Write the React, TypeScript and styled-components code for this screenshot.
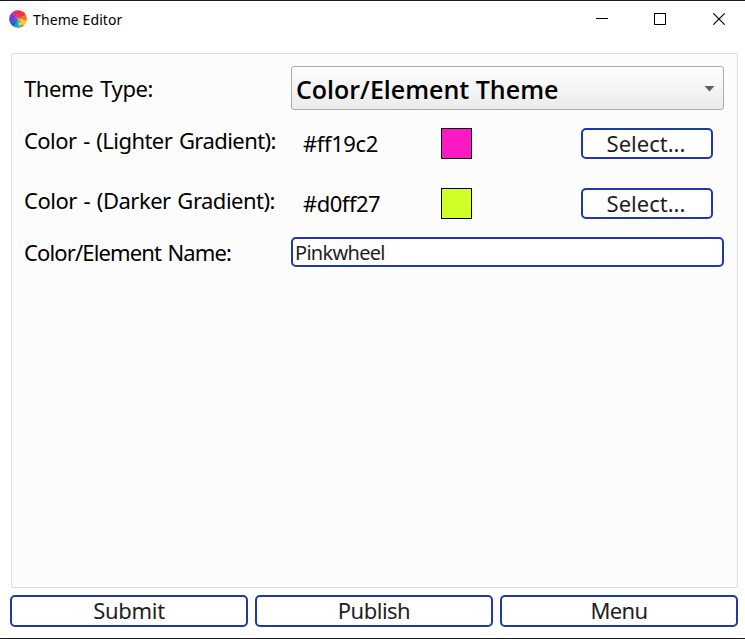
import React from "react";
import styled, { createGlobalStyle } from "styled-components";

const GlobalStyle = createGlobalStyle`
  * { box-sizing: border-box; }
  html, body { margin: 0; padding: 0; overflow: hidden; }
  body { background: #fff; color: #000; font-family: "Noto Sans", sans-serif; }
  button, input { font-family: inherit; margin: 0; }
`;

const Window = styled.div`
  width: 745px;
  height: 639px;
  display: flex;
  flex-direction: column;
  background: #fff;
  border-top: 1px solid #1b181b;
  border-bottom: 1px solid #1c1c20;
`;

const TitleBar = styled.header`
  height: 36px;
  flex: none;
  display: flex;
  align-items: center;
  padding-left: 9px;
`;

const Title = styled.h1`
  margin: 1px auto 0 6px;
  font-size: 14px;
  line-height: 20px;
  font-weight: 400;
  letter-spacing: 0.1px;
`;

const Captions = styled.div`
  display: flex;
  gap: 5.5px;
`;

const Caption = styled.button`
  width: 53px;
  height: 36px;
  padding: 0;
  border: 0;
  background: none;
  display: flex;
  align-items: center;
  justify-content: center;
`;

const Panel = styled.main`
  width: 727px;
  height: 535px;
  margin: 16px 0 0 11px;
  padding: 12px 13px 0 12px;
  border: 1px solid #dedede;
  border-radius: 1px;
  background: #fcfcfc;
`;

const Row = styled.div<{ $height: number; $gap: number }>`
  display: grid;
  grid-template-columns: 267px 433px;
  grid-template-rows: ${(p) => p.$height}px;
  margin-bottom: ${(p) => p.$gap}px;
`;

const Label = styled.label<{ $line: number; $tracking: number }>`
  font-size: 22px;
  line-height: ${(p) => p.$line}px;
  white-space: nowrap;
  word-spacing: 1.5px;
  letter-spacing: ${(p) => p.$tracking}px;
`;

const Combo = styled.button`
  display: flex;
  align-items: center;
  justify-content: space-between;
  height: 44px;
  padding: 2px 8px 0 4px;
  border: 1px solid #ababab;
  border-radius: 3px;
  background: linear-gradient(#fefefe, #ebebeb);
  color: #000;
  font: 600 25px/34px "Open Sans", sans-serif;
  text-align: left;
`;

const ColorField = styled.div`
  display: grid;
  grid-template-columns: 138px 140px 132px;
  grid-template-rows: 31px;
  padding-left: 12px;
`;

const Hex = styled.span<{ $tracking: number }>`
  font-size: 22px;
  line-height: 30px;
  letter-spacing: ${(p) => p.$tracking}px;
`;

const Swatch = styled.span<{ $color: string }>`
  width: 31px;
  height: 31px;
  border: 1px solid #000;
  background: ${(p) => p.$color};
`;

const Button = styled.button<{ $tracking?: number }>`
  padding: 0 0 2px;
  border: 2px solid #2039aa;
  border-radius: 5px;
  background: #fff;
  color: #1e1e1e;
  font-size: 22px;
  line-height: 26px;
  letter-spacing: ${(p) => p.$tracking ?? 0}px;
  overflow: hidden;
`;

const SelectButton = styled(Button)`
  padding: 0 2px 1px 0;
`;

const NameInput = styled.input`
  width: 433px;
  height: 30px;
  padding: 0 2px;
  border: 2px solid #2039aa;
  border-radius: 5px;
  background: #fff;
  color: #1e1e1e;
  font-size: 20px;
  letter-spacing: -0.7px;
  outline: none;
`;

const Footer = styled.footer`
  display: grid;
  grid-template-columns: 238px 238px 238px;
  grid-template-rows: 32px;
  gap: 7px;
  margin: 7px 0 0 10px;
`;

const wedges = ["#e5304a", "#ee3638", "#f0702c", "#f6b52a", "#58ae4c", "#1b9fd8", "#1767d2", "#3a55d8", "#8f30c0", "#d22f86"];

function point(angle: number) {
  const r = (angle * Math.PI) / 180;
  return `${(8.5 + 8.3 * Math.sin(r)).toFixed(2)} ${(8.5 - 8.3 * Math.cos(r)).toFixed(2)}`;
}

function Wheel() {
  return (
    <svg width="18" height="18" viewBox="0 0 17 17">
      {wedges.map((c, i) => (
        <path key={c} d={`M8.5 8.5L${point(i * 36 - 10)}A8.3 8.3 0 0 1 ${point(i * 36 + 27)}Z`} fill={c} />
      ))}
      <path d="M8.6 13l2.4-2.4 1.6-2.8 1.2 2.4 2.2.2-1.4 2-.4 2-2-.4-2.6 1z" fill="#f5cb32" />
    </svg>
  );
}

const colors = [
  { label: "Color - (Lighter Gradient):", hex: "#ff19c2", gap: 29, tracking: -0.56, hexTracking: -0.4 },
  { label: "Color - (Darker Gradient):", hex: "#d0ff27", gap: 18, tracking: -0.5, hexTracking: -0.5 },
];

export default function App() {
  return (
    <>
      <GlobalStyle />
      <Window>
        <TitleBar>
          <Wheel />
          <Title>Theme Editor</Title>
          <Captions>
            <Caption aria-label="Minimize">
              <svg width="12" height="12" shapeRendering="crispEdges"><path d="M0 5.5H12" stroke="#000" /></svg>
            </Caption>
            <Caption aria-label="Maximize">
              <svg width="12" height="12" shapeRendering="crispEdges"><rect x=".5" y=".5" width="11" height="11" fill="none" stroke="#000" /></svg>
            </Caption>
            <Caption aria-label="Close">
              <svg width="12" height="12"><path d="M.3.3L11.7 11.7M11.7.3L.3 11.7" stroke="#000" strokeWidth="1.1" /></svg>
            </Caption>
          </Captions>
        </TitleBar>
        <Panel>
          <Row $height={44} $gap={18}>
            <Label $line={44} $tracking={-0.38}>Theme Type:</Label>
            <Combo>
              <span>Color/Element Theme</span>
              <svg width="11" height="6"><path d="M.5 0H10.5L5.5 5.5Z" fill="#606060" /></svg>
            </Combo>
          </Row>
          {colors.map((c) => (
            <Row key={c.hex} $height={31} $gap={c.gap}>
              <Label $line={25} $tracking={c.tracking}>{c.label}</Label>
              <ColorField>
                <Hex $tracking={c.hexTracking}>{c.hex}</Hex>
                <Swatch $color={c.hex} />
                <SelectButton>Select...</SelectButton>
              </ColorField>
            </Row>
          ))}
          <Row $height={30} $gap={0}>
            <Label $line={30} $tracking={-0.86}>Color/Element Name:</Label>
            <NameInput defaultValue="Pinkwheel" />
          </Row>
        </Panel>
        <Footer>
          <Button $tracking={-0.3}>Submit</Button>
          <Button $tracking={-0.5}>Publish</Button>
          <Button $tracking={-0.7}>Menu</Button>
        </Footer>
      </Window>
    </>
  );
}
